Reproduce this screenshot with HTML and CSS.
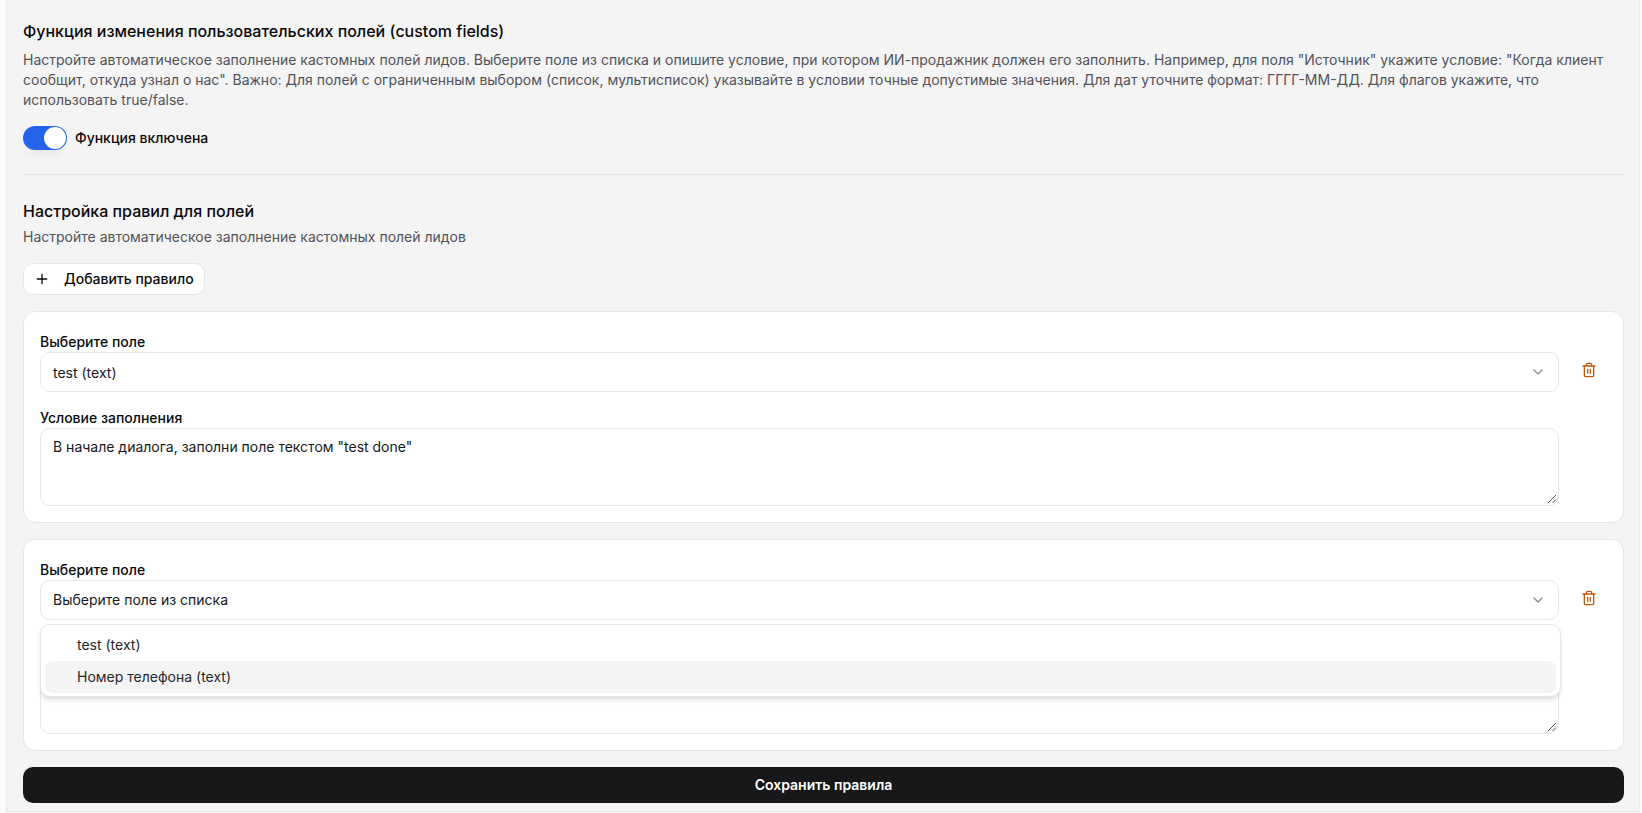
FILE: index.html
```html
<!DOCTYPE html>
<html lang="ru">
<head>
<meta charset="utf-8">
<title>Custom fields</title>
<link rel="stylesheet" href="styles.css">
</head>
<body>
<main class="panel">
  <section class="intro">
    <h2 class="title">Функция изменения пользовательских полей (custom fields)</h2>
    <p class="desc">Настройте автоматическое заполнение кастомных полей лидов. Выберите поле из списка и опишите условие, при котором ИИ-продажник должен его заполнить. Например, для поля "Источник" укажите условие: "Когда клиент сообщит, откуда узнал о нас". Важно: Для полей с ограниченным выбором (список, мультисписок) указывайте в условии точные допустимые значения. Для дат уточните формат: ГГГГ-ММ-ДД. Для флагов укажите, что использовать true/false.</p>
    <div class="switch-row">
      <span class="switch"><span class="knob"></span></span>
      <span class="switch-label">Функция включена</span>
    </div>
  </section>
  <hr class="divider">
  <section class="rules">
    <h3 class="title">Настройка правил для полей</h3>
    <p class="sub">Настройте автоматическое заполнение кастомных полей лидов</p>
    <button class="add-btn">
      <svg class="plus" width="16" height="16" viewBox="0 0 24 24" fill="none" stroke="currentColor" stroke-width="2" stroke-linecap="round"><path d="M5 12h14M12 5v14"/></svg>
      <span>Добавить правило</span>
    </button>
    <div class="card">
      <div class="fields">
        <div class="label">Выберите поле</div>
        <div class="select">
          <span>test (text)</span>
          <svg class="chev" width="16" height="16" viewBox="0 0 24 24" fill="none" stroke="currentColor" stroke-width="2" stroke-linecap="round" stroke-linejoin="round"><path d="m6 9 6 6 6-6"/></svg>
        </div>
        <div class="label label-second">Условие заполнения</div>
        <div class="textarea">В начале диалога, заполни поле текстом "test done"
          <svg class="grip" width="10" height="10" viewBox="0 0 10 10" stroke="#555" stroke-width="1"><path d="M1 9 9 1M5.5 9 9 5.5"/></svg>
        </div>
      </div>
      <button class="trash">
        <svg width="16" height="16" viewBox="0 0 24 24" fill="none" stroke="currentColor" stroke-width="2" stroke-linecap="round" stroke-linejoin="round"><path d="M3 6h18M19 6v14a2 2 0 0 1-2 2H7a2 2 0 0 1-2-2V6M8 6V4a2 2 0 0 1 2-2h4a2 2 0 0 1 2 2v2M10 11v6M14 11v6"/></svg>
      </button>
    </div>
    <div class="card">
      <div class="fields">
        <div class="label">Выберите поле</div>
        <div class="select-wrap">
          <div class="select">
            <span>Выберите поле из списка</span>
            <svg class="chev" width="16" height="16" viewBox="0 0 24 24" fill="none" stroke="currentColor" stroke-width="2" stroke-linecap="round" stroke-linejoin="round"><path d="m6 9 6 6 6-6"/></svg>
          </div>
          <div class="menu">
            <div class="option">test (text)</div>
            <div class="option active">Номер телефона (text)</div>
          </div>
        </div>
        <div class="textarea textarea-empty">
          <svg class="grip" width="10" height="10" viewBox="0 0 10 10" stroke="#555" stroke-width="1"><path d="M1 9 9 1M5.5 9 9 5.5"/></svg>
        </div>
      </div>
      <button class="trash">
        <svg width="16" height="16" viewBox="0 0 24 24" fill="none" stroke="currentColor" stroke-width="2" stroke-linecap="round" stroke-linejoin="round"><path d="M3 6h18M19 6v14a2 2 0 0 1-2 2H7a2 2 0 0 1-2-2V6M8 6V4a2 2 0 0 1 2-2h4a2 2 0 0 1 2 2v2M10 11v6M14 11v6"/></svg>
      </button>
    </div>
    <button class="save">Сохранить правила</button>
  </section>
</main>
</body>
</html>
```
FILE: styles.css
```css
* { box-sizing: border-box; }
html, body { margin: 0; height: 813px; overflow: hidden; }
body {
  background: #fafafa;
  font-family: Inter, "Noto Sans", sans-serif;
  color: #18181b;
  padding: 0 2px 1px 6px;
}
.panel {
  height: 812px;
  background: #f4f4f4;
  border-left: 1px solid #e9e9e9;
  border-right: 1px solid #ececec;
  border-bottom: 1px solid #e6e6e6;
  padding: 21px 15px 0 16px;
}
.title { margin: 0; font-size: 16px; line-height: 20px; font-weight: 500; color: #09090b; }
.desc { margin: 9px 0 0; font-size: 14px; line-height: 20px; color: #52525b; }
.switch-row { display: flex; align-items: center; gap: 8px; margin-top: 16px; }
.switch {
  display: flex; align-items: center; justify-content: flex-end;
  width: 44px; height: 24px; padding: 1px;
  border-radius: 12px; background: #2563eb;
  box-shadow: 0 6px 8px -3px rgba(0,0,0,.06);
}
.knob { width: 22px; height: 22px; border-radius: 50%; background: #fff; }
.switch-label { font-size: 14px; font-weight: 500; line-height: 20px; color: #09090b; }
.divider { border: 0; border-top: 1px solid #e4e4e7; margin: 24px 0 26px; height: 0; }
.sub { margin: 6px 0 0; font-size: 14px; line-height: 20px; color: #52525b; }
.add-btn {
  display: flex; align-items: center; gap: 14px;
  height: 32px; margin-top: 16px; padding: 0 10px;
  background: #fff; border: 1px solid #e7e7e9; border-radius: 10px;
  font: 500 14px/20px Inter, sans-serif; color: #09090b;
}
.card {
  display: flex; gap: 12px; margin-top: 16px; padding: 16px;
  background: #fff; border: 1px solid #e7e7e9; border-radius: 12px;
  height: 211.5px;
}
.card + .card { height: 212px; }
.fields { flex: 1; min-width: 0; }
.label { margin-top: 4px; font-size: 14px; font-weight: 500; line-height: 20px; color: #09090b; }
.label-second { margin-top: 16px; }
.select-wrap { position: relative; z-index: 2; }
.select {
  display: flex; align-items: center; justify-content: space-between;
  height: 40px; padding: 0 12px;
  border: 1px solid #e7e7e9; border-radius: 10px;
  font-size: 14px; background: #fff;
}
.chev { color: #8d8d93; }
.textarea {
  position: relative; height: 78px; padding: 8px 12px;
  border: 1px solid #e7e7e9; border-radius: 10px;
  font-size: 14px; line-height: 20px;
}
.textarea-empty { margin-top: 36px; }
.grip { position: absolute; right: 1px; bottom: 1px; }
.trash {
  width: 36px; height: 36px; margin-top: 24px; padding: 0;
  display: flex; align-items: center; justify-content: center;
  border: 0; background: transparent; color: #c2570c;
}
.menu {
  position: absolute; left: 0; right: -2px; top: 44px;
  padding: 4px; height: 73px;
  background: #fff; border: 1px solid #e7e7e9; border-radius: 10px;
  box-shadow: 0 4px 6px -1px rgba(0,0,0,.1), 0 2px 4px -2px rgba(0,0,0,.1);
  font-size: 14px; color: #27272a;
}
.option { height: 32px; line-height: 32px; padding-left: 32px; border-radius: 8px; }
.option.active { background: #f4f4f4; }
.save {
  display: block; width: 100%; height: 36px; margin-top: 16px;
  background: #18181b; color: #fff; border: 0; border-radius: 10px;
  font: 600 14px/20px Inter, sans-serif;
}
```
